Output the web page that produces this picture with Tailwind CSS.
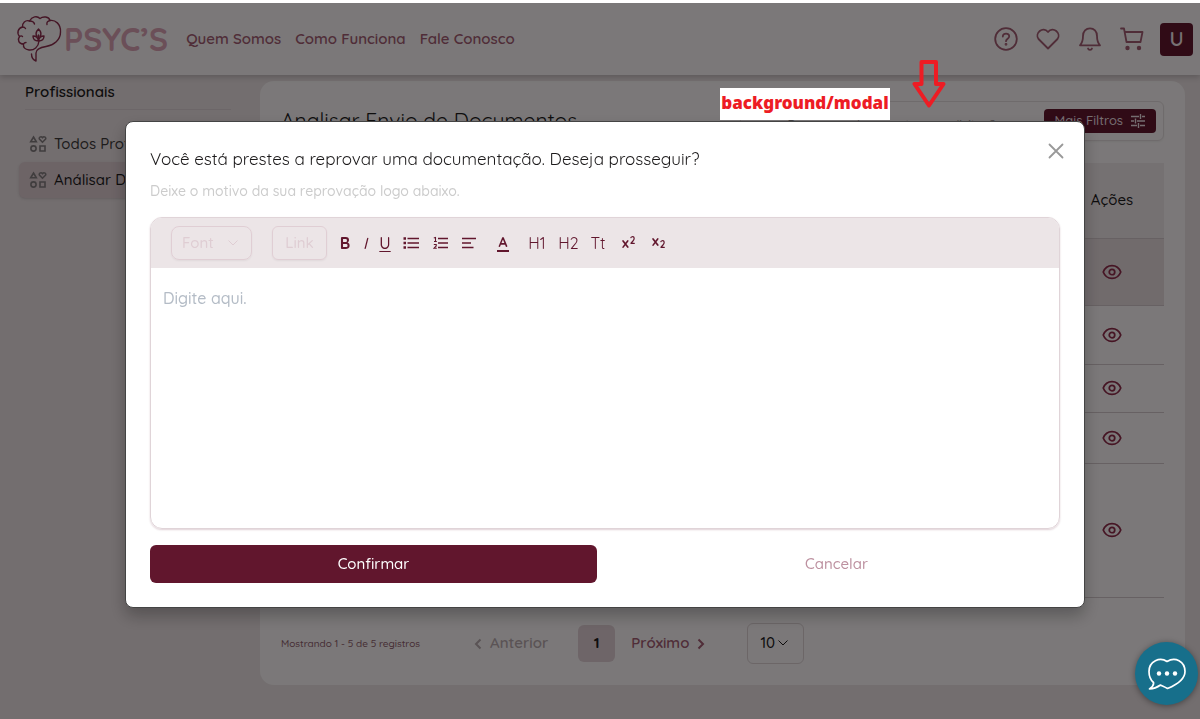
<!DOCTYPE html>
<html lang="pt-BR">
<head>
    <meta charset="UTF-8">
    <meta name="viewport" content="width=device-width, initial-scale=1.0">
    <title>Psyc's - Analisar Envio de Documentos</title>
    <script src="https://cdn.jsdelivr.net/npm/@tailwindcss/browser@4"></script>
</head>
<body class="min-h-screen overflow-hidden border-t-[3px] border-white bg-[#e6dcde] font-['Quicksand','Lato',sans-serif] font-medium text-[#1c1a1b]">
    <!-- Icons used more than once -->
    <svg class="hidden">
        <symbol id="eye" viewBox="0 0 24 24" fill="none" stroke="currentColor" stroke-width="2.1">
            <path d="M1.500 12C3.200 7.600 7.200 4.300 12 4.300S20.800 7.600 22.500 12C20.800 16.400 16.800 19.700 12 19.700S3.200 16.400 1.500 12z"/>
            <circle cx="12" cy="12" r="3.300"/>
        </symbol>
        <symbol id="shapes" viewBox="0 0 18 18" fill="none" stroke="currentColor" stroke-width="1.6">
            <path d="M4.500 2 7.300 6.800H1.700zM13.500 7.200 10.600 4.300C9.300 2.700 11.800.7 13.500 2.600 15.200.7 17.700 2.700 16.400 4.300z"/>
            <circle cx="4.500" cy="13.500" r="2.600"/>
            <path d="M11 11h5v5h-5z"/>
        </symbol>
        <symbol id="chevron" viewBox="0 0 12 12" fill="none" stroke="currentColor">
            <path d="M1.500 3.500 6 8l4.500-4.500"/>
        </symbol>
    </svg>

    <!-- Header -->
    <header class="relative flex h-[72px] items-center bg-[#f6f1f2] pr-[7px] pl-4 text-[#a05a70] shadow-[0_2px_6px_rgba(0,0,0,0.2)]">
        <a href="#" class="flex items-center gap-0.5">
            <svg class="h-12 w-[46px] text-[#8a2c4c]" viewBox="0 0 46 48" fill="none" stroke="currentColor" stroke-width="1.400" stroke-linecap="round" stroke-linejoin="round">
                <path d="M23 26C22.500 32 18 35.500 13 35 9 34.500 7 32.500 7.500 29 3 29 1 25 3.500 21.500.5 18 2 13 6.500 12 6 8 9.500 4.500 13.500 6 16 1.500 21 .5 24 3.500 27 1 33 1.500 34 5.500 39 4.500 45 9 44.500 17 44.500 25 38 30 30 31.500 24 32.500 20 34 20 38V46C17.500 45 15.500 42 15.500 39"/>
                <path d="M13.500 6C16 6 18 7 18.500 9M6.500 12C8 12 9 12.500 9.500 13.500M34 5.500C31.500 6 30.500 7.500 31 9.500M7.500 29C8 28 9 27.500 10 27.500M3.500 21.500C4.500 20.800 6 21 6.500 21.500"/>
                <path d="M22.500 26V20M22.500 26C18.500 26 17 23.500 17 21 20 21 22 22.500 22.500 26 23 22.500 25 21 28 21 28 23.500 26.500 26 22.500 26M21 21.500C19 18.500 20.500 16 22.500 14 24.500 16 26 18.500 24 21.500"/>
            </svg>
            <span class="text-[32px] leading-10 font-bold text-[#d69fb1]">PSYC’S</span>
        </a>
        <nav class="ml-[18px] flex gap-3.5 text-[15px] font-semibold">
            <a href="#">Quem Somos</a>
            <a href="#">Como Funciona</a>
            <a href="#">Fale Conosco</a>
        </nav>
        <div class="ml-auto flex items-center gap-4">
            <div class="flex gap-[18px]">
                <button aria-label="Ajuda">
                    <svg class="size-6" viewBox="0 0 24 24" fill="none" stroke="currentColor" stroke-width="1.800" stroke-linecap="round"><circle cx="12" cy="12" r="10.800"/><path d="M8.800 9.500C8.800 5.500 15.400 5.600 15.200 9.500 15 11.800 12 11.700 12 14.200"/><circle cx="12" cy="17.300" r=".5" fill="currentColor"/></svg>
                </button>
                <button aria-label="Favoritos">
                    <svg class="size-6" viewBox="0 0 24 24" fill="none" stroke="currentColor" stroke-width="1.800" stroke-linejoin="round"><path d="M12 21.500 2.500 12C-1.600 6.400 6.800-1.500 12 5 17.200-1.500 25.600 6.400 21.500 12z"/></svg>
                </button>
                <button aria-label="Notificações">
                    <svg class="size-6" viewBox="0 0 24 24" fill="none" stroke="currentColor" stroke-width="1.800" stroke-linejoin="round" stroke-linecap="round"><path d="M2 18.300C4.500 15.500 5 13.500 5 9 5 4.500 8 1.300 12 1.300S19 4.500 19 9C19 13.500 19.500 15.500 22 18.300zM10 21.500C10.500 23.200 13.500 23.200 14 21.500"/></svg>
                </button>
                <button aria-label="Carrinho">
                    <svg class="size-6" viewBox="0 0 24 24" fill="none" stroke="currentColor" stroke-width="1.800" stroke-linejoin="round" stroke-linecap="round"><path d="M1 1.500H4L6.500 15H20.500M4.600 5H22.500L20.500 15"/><circle cx="7.500" cy="21" r="1.300" fill="currentColor"/><circle cx="19" cy="21" r="1.300" fill="currentColor"/></svg>
                </button>
            </div>
            <button class="size-[33px] rounded bg-[#61162d] text-xl font-semibold text-[#f0e4e8]">U</button>
        </div>
    </header>

    <div class="flex">
        <!-- Sidebar -->
        <aside class="w-[260px] shrink-0 pt-1 pl-[19px]">
            <h2 class="mr-[29px] ml-1.5 border-b border-[#d8cdd0] pt-1 pb-2 text-[15px] leading-[18px] font-semibold">Profissionais</h2>
            <nav class="mt-4 mr-5 text-[15px] text-[#3c3839]">
                <a href="#" class="flex h-9 items-center gap-[7px] px-2.5"><svg class="size-[18px] shrink-0 text-[#807a7c]"><use href="#shapes"/></svg>Todos Profissionais</a>
                <a href="#" class="flex h-9 items-center gap-[7px] rounded-md bg-[#dac8cd] px-2.5 text-[#1c1a1b] shadow"><svg class="size-[18px] shrink-0 text-[#807a7c]"><use href="#shapes"/></svg>Análisar Documentos</a>
            </nav>
        </aside>

        <!-- Documents -->
        <main class="mt-1.5 mr-[15px] h-[604px] flex-1 rounded-[14px] bg-[#f6f1f2] px-[21px] pt-5">
            <div class="flex h-10 items-center justify-between">
                <h1 class="text-[21px] font-normal">Analisar Envio de Documentos</h1>
                <div class="flex h-10 w-[424px] items-center justify-end rounded-md border border-[#dfd6d8] pr-[7px] shadow-xs">
                    <input type="text" aria-label="Buscar" placeholder="Buscar por documentos ou solicitações" class="mr-4 h-6 w-60 pt-1 text-xs outline-none placeholder:text-[#8c8688]">
                    <button class="flex h-6 items-center gap-2 rounded bg-[#61162d] px-[11px] text-[13px] text-[#eadde1]">
                        Mais Filtros
                        <svg class="size-3.5" viewBox="0 0 14 14" fill="none" stroke="currentColor" stroke-width="1.400"><path d="M0 2.500H8M11 2.500H14M9.500 0V5M0 7H3M6 7H14M4.500 4.500V9.500M0 11.500H6M9 11.500H14M7.500 9V14"/></svg>
                    </button>
                </div>
            </div>
            <table class="mt-[22px] w-full">
                <thead>
                    <tr class="h-[75px] bg-[#ebe2e4]">
                        <td></td>
                        <th class="w-[104px] text-center text-[15px] font-medium">Ações</th>
                    </tr>
                </thead>
                <tbody class="text-[#8c2a48] [&_button]:mx-auto [&_button]:block">
                    <tr class="h-[67px] border-y border-[#cfc3c6] bg-[#e2d6d9]"><td></td><td><button aria-label="Visualizar"><svg class="size-5"><use href="#eye"/></svg></button></td></tr>
                    <tr class="h-[59px] border-b border-[#cfc3c6]"><td></td><td><button aria-label="Visualizar"><svg class="size-5"><use href="#eye"/></svg></button></td></tr>
                    <tr class="h-12 border-b border-[#cfc3c6]"><td></td><td><button aria-label="Visualizar"><svg class="size-5"><use href="#eye"/></svg></button></td></tr>
                    <tr class="h-[51px] border-b border-[#cfc3c6]"><td></td><td><button aria-label="Visualizar"><svg class="size-5"><use href="#eye"/></svg></button></td></tr>
                    <tr class="h-[134px] border-b border-[#cfc3c6]"><td></td><td><button aria-label="Visualizar"><svg class="size-5"><use href="#eye"/></svg></button></td></tr>
                </tbody>
            </table>
            <div class="mt-[25px] flex h-[42px] items-center text-[15px] font-semibold">
                <p class="w-[143px] text-[10px] font-medium whitespace-nowrap text-[#8c5a69]">Mostrando 1 - 5 de 5 registros</p>
                <button class="ml-12 flex items-center gap-1.5 text-[#b4a6aa]"><svg class="size-3 rotate-90 stroke-2"><use href="#chevron"/></svg>Anterior</button>
                <button class="ml-[30px] size-[37px] rounded-md bg-[#dccbd0] font-bold">1</button>
                <button class="ml-4 flex items-center gap-1.5 text-[#a05a70]">Próximo<svg class="size-3 -rotate-90 stroke-2"><use href="#chevron"/></svg></button>
                <div class="relative ml-10 h-[41px] w-[57px]">
                    <select aria-label="Registros por página" class="size-full appearance-none rounded-md border border-[#d8cccf] pl-3 font-medium"><option>10</option></select>
                    <svg class="pointer-events-none absolute top-[14px] right-[15px] size-3"><use href="#chevron"/></svg>
                </div>
            </div>
        </main>
    </div>

    <!-- Modal -->
    <div class="fixed inset-x-0 top-[3px] bottom-0 flex items-center bg-black/50 pt-[7px] pl-[10px]">
        <div role="dialog" aria-labelledby="modalTitle" class="mx-auto w-full max-w-[960px] rounded-lg border border-[#444] bg-white px-6 pt-[25px] pb-6 shadow-[0_8px_16px_rgba(0,0,0,0.25)]">
            <div class="flex items-start justify-between">
                <h2 id="modalTitle" class="text-[17px] leading-6 font-normal">Você está prestes a reprovar uma documentação. Deseja prosseguir?</h2>
                <button aria-label="Fechar" class="-mt-2 -mr-2 p-1 text-[#999]">
                    <svg class="size-4" viewBox="0 0 16 16" stroke="currentColor" stroke-width="1.800" stroke-linecap="round"><path d="M1.500 1.500 14.500 14.500M14.500 1.500 1.500 14.500"/></svg>
                </button>
            </div>
            <label for="motivo" class="mt-2.5 block text-sm leading-5 text-[#ccc]">Deixe o motivo da sua reprovação logo abaixo.</label>

            <div class="mt-4 overflow-hidden rounded-xl border border-[#e0d4d8] shadow-[0_1px_2px_rgba(97,22,45,0.2)]">
                <div class="flex h-[50px] items-center bg-[#ece5e7] pl-5 text-base text-[#61162d]">
                    <button class="flex h-[34px] w-[81px] items-center justify-between rounded-lg border border-[#e0ced4] pr-3 pl-2.5 text-[15px] text-[#dfcdd3] shadow-xs">Font<svg class="size-3"><use href="#chevron"/></svg></button>
                    <button class="ml-5 h-[34px] w-[55px] rounded-md border border-[#e0ced4] text-[15px] text-[#dfcdd3] shadow-xs">Link</button>
                    <button aria-label="Negrito" class="ml-3 w-3 font-bold">B</button>
                    <button aria-label="Itálico" class="ml-1.5 w-4 italic">I</button>
                    <button aria-label="Sublinhado" class="ml-1.5 w-3 underline underline-offset-2">U</button>
                    <button aria-label="Lista" class="ml-3"><svg class="size-4" viewBox="0 0 16 16" stroke="currentColor" stroke-width="1.300"><path d="M4.500 3.500H16M4.500 8H16M4.500 12.500H16"/><path stroke-width="2.400" d="M.5 3.500H3M.5 8H3M.5 12.500H3"/></svg></button>
                    <button aria-label="Lista numerada" class="ml-3.5"><svg class="size-4" viewBox="0 0 16 16" fill="none" stroke="currentColor" stroke-width="1.300"><path d="M5 3.500H15M5 8H15M5 12.500H15"/><path stroke-width="1.100" d="M.8 3 2.500 2.500V6.500M1 6.500H3.800M.8 9.500H3.200V11L1 13.200H3.800"/></svg></button>
                    <button aria-label="Alinhar" class="ml-3"><svg class="size-4" viewBox="0 0 16 16" stroke="currentColor" stroke-width="1.300"><path d="M1 3.500H15M1 8H10M1 12.500H12.500"/></svg></button>
                    <button aria-label="Cor do texto" class="ml-5"><span class="block w-3 border-b-2 text-sm leading-4 font-bold">A</span></button>
                    <button class="ml-[18px] w-5 font-normal">H1</button>
                    <button class="ml-2.5 w-[23px] font-normal">H2</button>
                    <button class="ml-2.5 w-4 font-normal">Tt</button>
                    <button aria-label="Sobrescrito" class="ml-4 flex w-4 items-center text-sm leading-4 font-bold">x<span class="mb-1 ml-px text-[10px] leading-3">2</span></button>
                    <button aria-label="Subscrito" class="ml-3.5 flex w-4 items-center text-sm leading-4 font-bold"><span class="mb-1">x</span><span class="mt-1 ml-px text-[10px] leading-3">2</span></button>
                </div>
                <textarea id="motivo" placeholder="Digite aqui." class="block h-[260px] w-full resize-none px-3 py-[18px] text-base outline-none placeholder:text-[#b4bcc6]"></textarea>
            </div>

            <div class="mt-4 grid grid-cols-2 gap-4">
                <button class="h-[38px] rounded-md bg-[#61162d] text-[15px] text-white">Confirmar</button>
                <button class="h-[38px] text-[15px] text-[#bd91a0]">Cancelar</button>
            </div>
        </div>
    </div>

    <!-- Note and arrow over the backdrop -->
    <p class="absolute top-[88px] left-[720px] h-8 w-[170px] bg-white text-center font-['Noto_Sans','Open_Sans',sans-serif] text-[17px] leading-[30px] font-black whitespace-nowrap text-[#ed1c24]">background/modal</p>
    <svg class="absolute top-[59px] left-[912px] h-[50px] w-[34px]" viewBox="0 0 34 50" fill="none" stroke="#ed1c24" stroke-width="4" stroke-linejoin="round"><path d="M9.500 3H24V25H31.500L17 46.500 2.500 25H9.500z"/></svg>

    <!-- Chat -->
    <button aria-label="Abrir chat" class="fixed right-0.5 bottom-3.5 flex size-[63px] items-center justify-center rounded-full bg-[#176f8b] shadow-[0_1px_6px_rgba(0,0,0,0.4)]">
        <svg class="h-8 w-[38px]" viewBox="0 0 38 32" fill="none" stroke="#fff" stroke-width="1.700" stroke-linejoin="round">
            <path d="M1.500 31C4.500 29 6 27 5.500 24.500 2 21.500 1 17.500 1 13.500 1 3 12-1.500 19 3.500 27-1.500 37 3 37 13.500 37 22 28 27 19.500 30.500 17 29 14.500 28 12.500 27 9 29.500 5 30.800 1.500 31z"/>
            <g fill="#fff" stroke="none"><circle cx="11" cy="15.500" r="2.200"/><circle cx="19" cy="15.500" r="2.200"/><circle cx="27" cy="15.500" r="2.200"/></g>
        </svg>
    </button>
</body>
</html>
